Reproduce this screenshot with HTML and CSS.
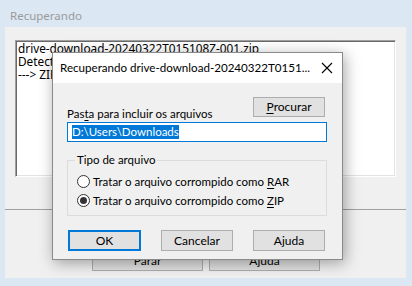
FILE: index.html
```html
<!DOCTYPE html>
<html>
<head>
<meta charset="utf-8">
<link rel="stylesheet" href="styles.css">
</head>
<body>
<div class="win">
  <div class="win-title">Recuperando</div>
  <div class="win-body">
    <div class="log">
      <div>drive-download-20240322T015108Z-001.zip</div>
      <div>Detectado arquivo ZIP</div>
      <div>---&gt; ZIP</div>
    </div>
    <div class="sep"></div>
    <div class="win-buttons">
      <div class="btn wide">Parar</div>
      <div class="btn wide">Ajuda</div>
    </div>
  </div>
</div>

<div class="dialog">
  <div class="dlg-title">
    <span class="dlg-title-text">Recuperando drive-download-20240322T0151...</span>
    <svg class="close" width="12" height="12" viewBox="0 0 12 12"><path d="M1 1 L11 11 M11 1 L1 11" stroke="#000" stroke-width="1.1" fill="none"/></svg>
  </div>
  <div class="dlg-body">
    <div class="row-top">
      <div class="label">Pas<u>t</u>a para incluir os arquivos</div>
      <div class="btn small"><u>P</u>rocurar</div>
    </div>
    <div class="input"><span class="sel">D:\Users\Downloads</span></div>
    <div class="group">
      <div class="legend">Tipo de arquivo</div>
      <div class="radio-row"><span class="radio"></span><span>Tratar o arquivo corrompido como <u>R</u>AR</span></div>
      <div class="radio-row"><span class="radio on"></span><span>Tratar o arquivo corrompido como <u>Z</u>IP</span></div>
    </div>
    <div class="dlg-buttons">
      <div class="btn ok">OK</div>
      <div class="btn">Cancelar</div>
      <div class="btn">Ajuda</div>
    </div>
  </div>
</div>
</body>
</html>
```
FILE: styles.css
```css
* { box-sizing: border-box; }
html, body { margin: 0; padding: 0; }
body {
  width: 412px;
  height: 286px;
  overflow: hidden;
  font-family: "Noto Sans", "Open Sans", sans-serif;
  font-size: 12px;
  color: #000;
  position: relative;
}
.win {
  width: 412px;
  height: 286px;
  background: #dce7f4;
  padding: 0 6px 0 5px;
}
.win-title {
  height: 27px;
  padding: 6px 0 0 5px;
  line-height: 20px;
  color: #9a9a9a;
  font-size: 11.5px;
}
.win-body {
  background: #f0f0f0;
  height: 251px;
  padding-top: 13px;
}
.log {
  margin-left: 10px;
  width: 381px;
  height: 137px;
  background: #fff;
  border-top: 1px solid #a0a0a0;
  border-left: 1px solid #a0a0a0;
  border-right: 1px solid #fff;
  border-bottom: 1px solid #fff;
  box-shadow: inset 1px 1px 0 #696969, inset -1px -1px 0 #e3e3e3;
  padding: 1px 0 0 2px;
  line-height: 13px;
  font-size: 11.8px;
  white-space: nowrap;
}
.sep {
  margin-top: 32px;
  height: 1px;
  background: #a0a0a0;
}
.win-buttons {
  display: flex;
  gap: 6px;
  margin: 40px 0 0 87px;
}
.btn {
  height: 21px;
  width: 72px;
  background: #e1e1e1;
  border: 1px solid #adadad;
  display: flex;
  align-items: center;
  justify-content: center;
  line-height: 16px;
  font-family: "Lato", "Noto Sans", sans-serif;
  font-size: 12px;
}
.btn.wide { width: 111px; }
.dialog {
  position: absolute;
  left: 52px;
  top: 52px;
  width: 291px;
  height: 208px;
  border: 1px solid #8a8a8a;
  background: #f0f0f0;
  box-shadow: 2px 3px 14px rgba(0,0,0,0.35);
  display: flex;
  flex-direction: column;
}
.dlg-title {
  height: 30px;
  background: #fff;
  display: flex;
  align-items: center;
  justify-content: space-between;
  padding: 0 9px 0 7px;
}
.dlg-title-text {
  line-height: 16px;
  white-space: nowrap;
  font-family: "Lato", "Noto Sans", sans-serif;
  font-size: 11.6px;
}
.close { display: block; flex: none; }
.dlg-body {
  padding: 14px 17px 0 14px;
  font-family: "Lato", "Noto Sans", sans-serif;
  font-size: 11.5px;
}
.row-top {
  height: 25px;
  display: flex;
  justify-content: space-between;
  align-items: flex-start;
}
.label {
  align-self: flex-end;
  line-height: 16px;
}
.btn.small { height: 20px; }
.input {
  height: 20px;
  margin-right: -2px;
  border: 1px solid #0078d7;
  background: #fff;
  padding: 0 0 0 4px;
  display: flex;
  align-items: center;
}
.sel {
  background: #0078d7;
  color: #fff;
  line-height: 14px;
}
.group {
  margin-top: 18px;
  height: 56px;
  width: 260px;
  border: 1px solid #dcdcdc;
}
.legend {
  width: fit-content;
  margin: -9px 0 0 7px;
  padding: 0 2px;
  line-height: 16px;
  background: #f0f0f0;
}
.radio-row {
  display: flex;
  align-items: center;
  height: 19px;
  padding-left: 9px;
  gap: 3px;
}
.legend + .radio-row { margin-top: 4px; }
.radio {
  width: 13px;
  height: 13px;
  border: 1px solid #333;
  border-radius: 50%;
  background: #fff;
  display: flex;
  align-items: center;
  justify-content: center;
}
.radio.on::after {
  content: "";
  width: 7px;
  height: 7px;
  border-radius: 50%;
  background: #333;
}
.dlg-buttons {
  display: flex;
  gap: 20px;
  margin: 14px 0 0 1px;
}
.btn.ok {
  width: 73px;
  border: 2px solid #0078d7;
}
u { text-decoration-thickness: 1px; text-underline-offset: 2px; }
```
